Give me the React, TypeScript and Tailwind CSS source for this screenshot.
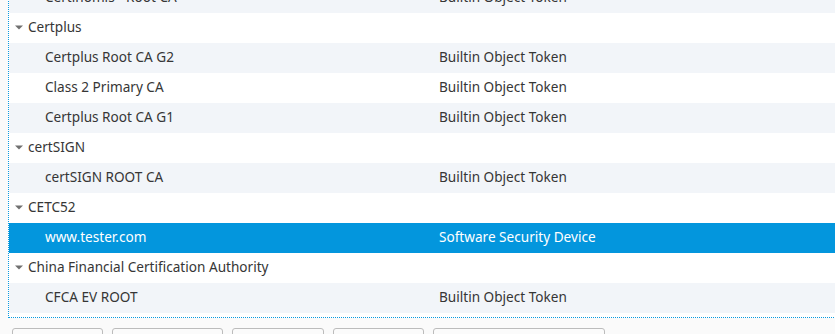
import React from 'react';

type Row = { name: string; device?: string; group?: boolean; selected?: boolean };

const rows: Row[] = [
  { name: 'Certinomis - Root CA', device: 'Builtin Object Token' },
  { name: 'Certplus', group: true },
  { name: 'Certplus Root CA G2', device: 'Builtin Object Token' },
  { name: 'Class 2 Primary CA', device: 'Builtin Object Token' },
  { name: 'Certplus Root CA G1', device: 'Builtin Object Token' },
  { name: 'certSIGN', group: true },
  { name: 'certSIGN ROOT CA', device: 'Builtin Object Token' },
  { name: 'CETC52', group: true },
  { name: 'www.tester.com', device: 'Software Security Device', selected: true },
  { name: 'China Financial Certification Authority', group: true },
  { name: 'CFCA EV ROOT', device: 'Builtin Object Token' },
];

const buttons = [91, 111, 92, 91, 172];

const Arrow = () => (
  <svg width="8" height="5" viewBox="0 0 8 5" className="mr-[5px]">
    <path d="M0 0.5h8L4 4.5z" fill="#707070" />
  </svg>
);

const TreeRow = ({ row, index }: { row: Row; index: number }) => {
  const bg = row.selected ? 'bg-[#0396dd] text-white' : index % 2 === 0 ? 'bg-[#f2f5f9] text-[#363636]' : 'bg-white text-[#363636]';
  return (
    <div className={`flex items-center h-[30px] pb-[1px] ${bg}`}>
      {row.group ? (
        <div className="flex items-center pl-[6px]">
          <Arrow />
          <span>{row.name}</span>
        </div>
      ) : (
        <>
          <span className="pl-[36px] w-[430px]">{row.name}</span>
          <span>{row.device}</span>
        </>
      )}
    </div>
  );
};

export default function App() {
  return (
    <div
      className="h-[334px] w-[835px] overflow-hidden bg-[#fafafa] flex flex-col text-[13.6px]"
      style={{ fontFamily: '"Noto Sans", "Open Sans", sans-serif' }}
    >
      <div className="ml-[8px] mt-[-17px] w-[840px] h-[335px] shrink-0 bg-white border-l border-b border-dotted border-[#0a9be0] flex flex-col">
        {rows.map((row, i) => (
          <TreeRow key={row.name} row={row} index={i} />
        ))}
      </div>
      <div className="flex gap-[9px] pl-[12px] mt-[10px]">
        {buttons.map((w, i) => (
          <div key={i} className="h-[32px] shrink-0 rounded-[3px] border border-[#bcbcbc] bg-[#fbfbfb]" style={{ width: w }} />
        ))}
      </div>
    </div>
  );
}
